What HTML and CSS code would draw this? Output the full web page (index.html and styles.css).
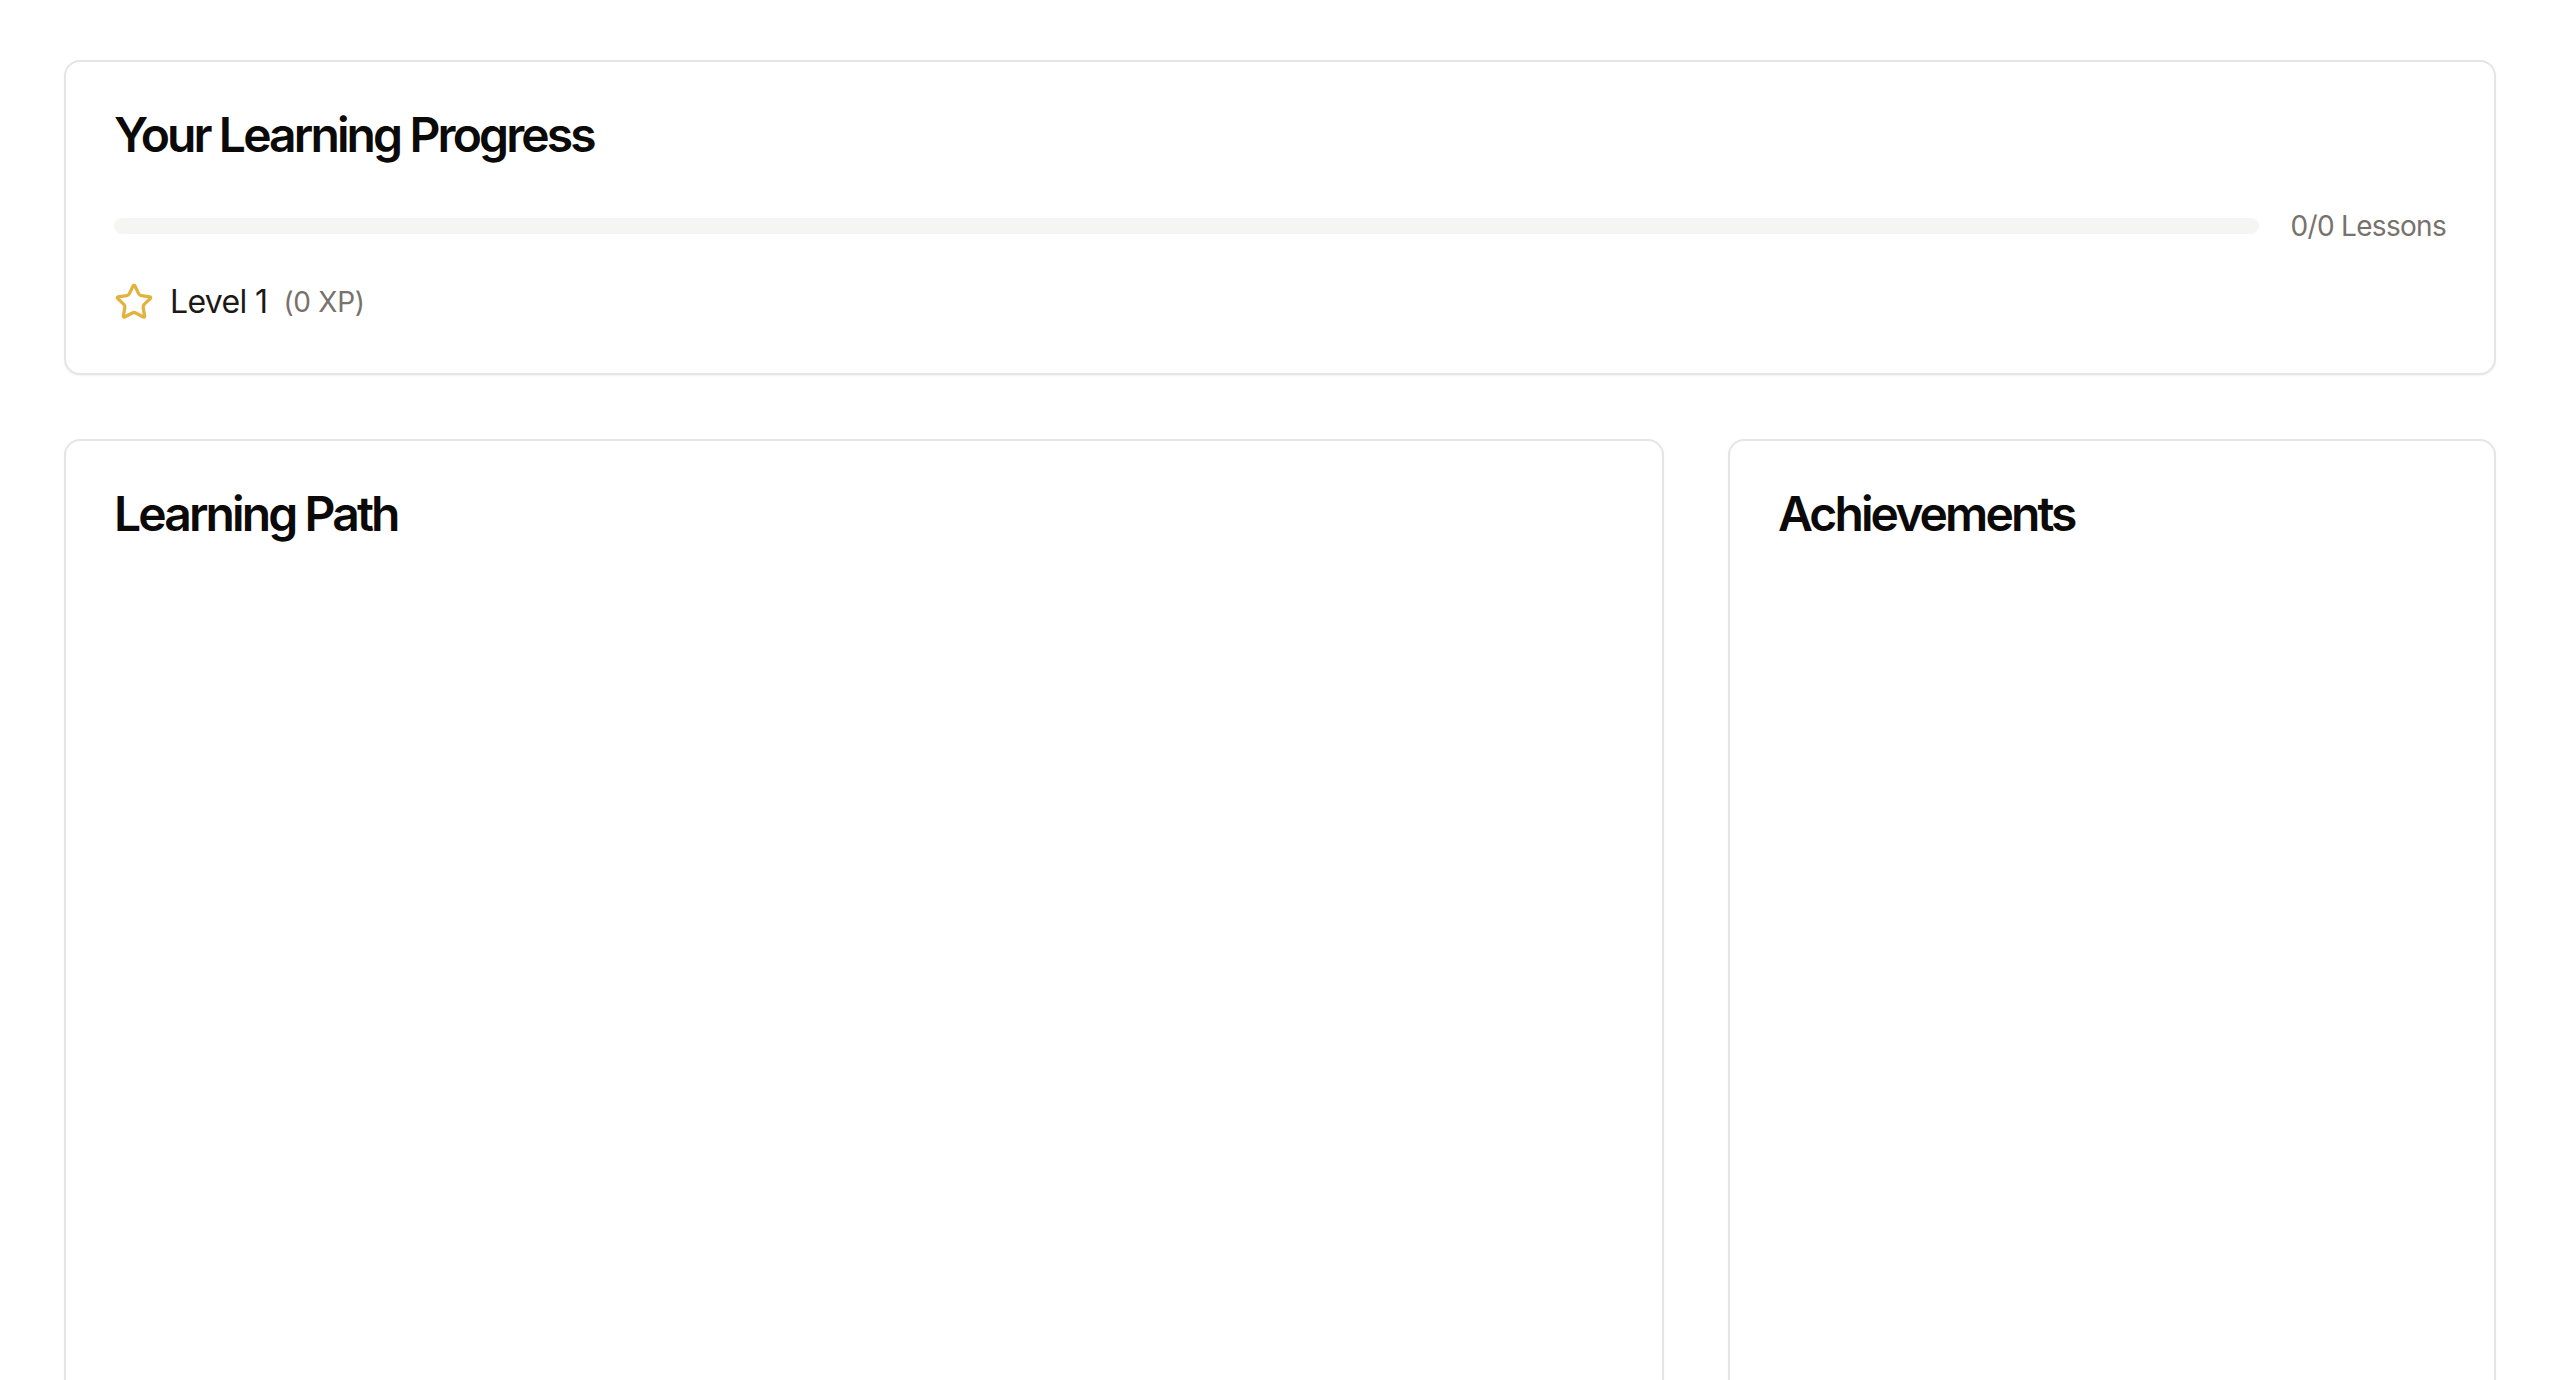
FILE: index.html
```html
<!DOCTYPE html>
<html lang="en">
<head>
<meta charset="utf-8">
<title>Learning Progress</title>
<link rel="stylesheet" href="styles.css">
</head>
<body>
<main class="page">
  <section class="card progress-card">
    <h2 class="card-title">Your Learning Progress</h2>
    <div class="progress-row">
      <div class="progress-track"><div class="progress-fill" style="width:0%"></div></div>
      <span class="progress-label">0/0 Lessons</span>
    </div>
    <div class="level-row">
      <svg class="star" viewBox="0 0 24 24" fill="none" stroke="currentColor" stroke-width="2" stroke-linecap="round" stroke-linejoin="round"><path d="M11.525 2.295a.53.53 0 0 1 .95 0l2.31 4.679a2.123 2.123 0 0 0 1.595 1.16l5.166.756a.53.53 0 0 1 .294.904l-3.736 3.638a2.123 2.123 0 0 0-.611 1.878l.882 5.14a.53.53 0 0 1-.771.56l-4.618-2.428a2.122 2.122 0 0 0-1.973 0L6.396 21.01a.53.53 0 0 1-.77-.56l.881-5.139a2.122 2.122 0 0 0-.611-1.879L2.16 9.795a.53.53 0 0 1 .294-.906l5.165-.755a2.122 2.122 0 0 0 1.597-1.16z"/></svg>
      <span class="level-text">Level 1</span>
      <span class="xp-text">(0 XP)</span>
    </div>
  </section>
  <div class="grid">
    <section class="card path-card">
      <h2 class="card-title">Learning Path</h2>
    </section>
    <section class="card achievements-card">
      <h2 class="card-title">Achievements</h2>
    </section>
  </div>
</main>
</body>
</html>
```

FILE: styles.css
```css
* { box-sizing: border-box; }
html, body { margin: 0; padding: 0; background: #ffffff; }
body {
  font-family: Inter, "Noto Sans", "Liberation Sans", sans-serif;
  color: #0c0a09;
}
.page {
  padding: 60px 64px 0;
  display: flex;
  flex-direction: column;
  gap: 64px;
}
.card {
  background: #ffffff;
  border: 2px solid #e7e5e4;
  border-radius: 16px;
  padding: 48px;
  box-shadow: 0 1px 2px rgba(0, 0, 0, 0.05);
}
.card-title {
  margin: 0;
  font-size: 48px;
  line-height: 48px;
  font-weight: 600;
  letter-spacing: -0.06em;
  color: #0c0a09;
  padding-top: 1px;
}
.progress-card .card-title { margin-bottom: 47px; }
.progress-row {
  display: flex;
  align-items: center;
  gap: 32px;
  height: 40px;
  margin-bottom: 31px;
}
.progress-track {
  flex: 1;
  height: 16px;
  background: #f5f5f4;
  border-radius: 9999px;
  overflow: hidden;
}
.progress-fill { height: 100%; background: #eab308; }
.progress-label {
  font-size: 28px;
  line-height: 40px;
  letter-spacing: -0.025em;
  color: #78716c;
  white-space: nowrap;
}
.level-row {
  display: flex;
  align-items: center;
  height: 48px;
  padding-top: 2px;
}
.star {
  width: 40px;
  height: 40px;
  color: #e3b23c;
  margin-right: 16px;
  flex-shrink: 0;
}
.level-text {
  font-size: 32px;
  line-height: 48px;
  letter-spacing: -0.02em;
  color: #1c1917;
  margin-right: 16px;
}
.xp-text {
  font-size: 28px;
  line-height: 48px;
  letter-spacing: -0.01em;
  color: #78716c;
}
.grid {
  display: grid;
  grid-template-columns: repeat(3, minmax(0, 1fr));
  gap: 64px;
}
.path-card { grid-column: span 2; min-height: 1100px; }
.achievements-card { min-height: 1100px; }
```
